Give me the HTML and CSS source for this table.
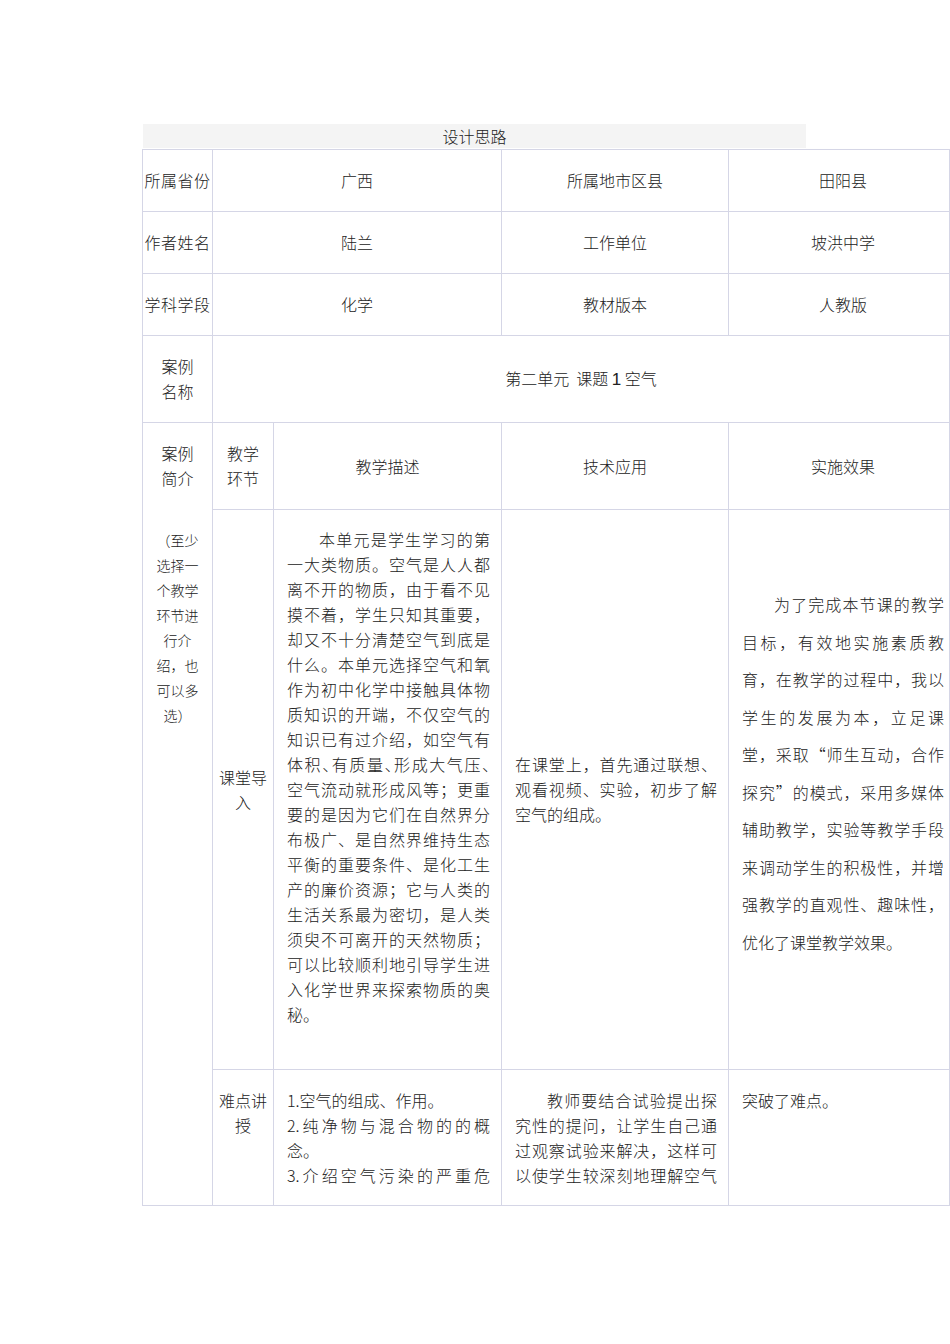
FILE: index.html
```html
<!DOCTYPE html>
<html lang="zh-CN">
<head>
<meta charset="utf-8">
<title>设计思路</title>
<link rel="stylesheet" href="styles.css">
</head>
<body>
<div class="page">
  <div class="caption">设计思路</div>
  <table class="sheet">
    <colgroup>
      <col class="c1"><col class="c2"><col class="c3"><col class="c4"><col class="c5">
    </colgroup>
    <tr class="r-info">
      <td class="label">所属省份</td>
      <td colspan="2" class="center">广西</td>
      <td class="center">所属地市区县</td>
      <td class="center last-col">田阳县</td>
    </tr>
    <tr class="r-info">
      <td class="label">作者姓名</td>
      <td colspan="2" class="center">陆兰</td>
      <td class="center">工作单位</td>
      <td class="center last-col">坡洪中学</td>
    </tr>
    <tr class="r-info">
      <td class="label">学科学段</td>
      <td colspan="2" class="center">化学</td>
      <td class="center">教材版本</td>
      <td class="center last-col">人教版</td>
    </tr>
    <tr class="r-name">
      <td class="center">案例<br>名称</td>
      <td colspan="4" class="center title">第二单元&nbsp;&nbsp;课题 <span class="num">1</span> 空气</td>
    </tr>
    <tr class="r-head">
      <td rowspan="3" class="intro">
        <div>案例<br>简介</div>
        <div class="note">（至少<br>选择一<br>个教学<br>环节进<br>行介<br>绍，也<br>可以多<br>选）</div>
      </td>
      <td class="center">教学<br>环节</td>
      <td class="center">教学描述</td>
      <td class="center">技术应用</td>
      <td class="center last-col">实施效果</td>
    </tr>
    <tr class="r-main">
      <td class="center stage">课堂导<br>入</td>
      <td class="body desc">
        <span class="ln ind">本单元是学生学习的第</span>
        <span class="ln">一大类物质。空气是人人都</span>
        <span class="ln">离不开的物质，由于看不见</span>
        <span class="ln">摸不着，学生只知其重要，</span>
        <span class="ln">却又不十分清楚空气到底是</span>
        <span class="ln">什么。本单元选择空气和氧</span>
        <span class="ln">作为初中化学中接触具体物</span>
        <span class="ln">质知识的开端，不仅空气的</span>
        <span class="ln">知识已有过介绍，如空气有</span>
        <span class="ln tight">体积、有质量、形成大气压、</span>
        <span class="ln">空气流动就形成风等；更重</span>
        <span class="ln">要的是因为它们在自然界分</span>
        <span class="ln">布极广、是自然界维持生态</span>
        <span class="ln">平衡的重要条件、是化工生</span>
        <span class="ln">产的廉价资源；它与人类的</span>
        <span class="ln">生活关系最为密切，是人类</span>
        <span class="ln">须臾不可离开的天然物质；</span>
        <span class="ln">可以比较顺利地引导学生进</span>
        <span class="ln">入化学世界来探索物质的奥</span>
        <span class="ln end">秘。</span>
      </td>
      <td class="body tech">
        <span class="ln">在课堂上，首先通过联想、</span>
        <span class="ln">观看视频、实验，初步了解</span>
        <span class="ln end">空气的组成。</span>
      </td>
      <td class="body effect">
        <span class="ln ind">为了完成本节课的教学</span>
        <span class="ln">目标，有效地实施素质教</span>
        <span class="ln">育，在教学的过程中，我以</span>
        <span class="ln">学生的发展为本，立足课</span>
        <span class="ln">堂，采取“师生互动，合作</span>
        <span class="ln">探究”的模式，采用多媒体</span>
        <span class="ln">辅助教学，实验等教学手段</span>
        <span class="ln">来调动学生的积极性，并增</span>
        <span class="ln">强教学的直观性、趣味性，</span>
        <span class="ln end">优化了课堂教学效果。</span>
      </td>
    </tr>
    <tr class="r-last">
      <td class="center stage">难点讲<br>授</td>
      <td class="body">
        <span class="ln end">1.空气的组成、作用。</span>
        <span class="ln">2.纯净物与混合物的的概</span>
        <span class="ln end">念。</span>
        <span class="ln">3.介绍空气污染的严重危</span>
      </td>
      <td class="body">
        <span class="ln ind">教师要结合试验提出探</span>
        <span class="ln">究性的提问，让学生自己通</span>
        <span class="ln">过观察试验来解决，这样可</span>
        <span class="ln">以使学生较深刻地理解空气</span>
      </td>
      <td class="body effect">
        <span class="ln end">突破了难点。</span>
      </td>
    </tr>
  </table>
</div>
</body>
</html>
```

FILE: styles.css
```css
html, body {
  margin: 0;
  padding: 0;
  background: #ffffff;
}

body {
  font-family: "Noto Sans CJK SC", "Liberation Sans", sans-serif;
  font-size: 16px;
  font-weight: 300;
  color: #222222;
}

.page {
  padding: 124px 0 0 142px;
}

.caption {
  width: 663px;
  height: 24px;
  margin-left: 1px;
  background: #f4f4f4;
  text-align: center;
  line-height: 24px;
  font-size: 16px;
}

.sheet {
  border-collapse: collapse;
  table-layout: fixed;
  width: 807px;
  margin-top: 1px;
}

.c1 { width: 70px; }
.c2 { width: 61px; }
.c3 { width: 228px; }
.c4 { width: 227px; }
.c5 { width: 221px; }

.sheet td {
  border: 1px solid #d5d6e6;
  padding: 0;
  line-height: 25px;
  vertical-align: middle;
}

.center {
  text-align: center;
}

.sheet td.last-col {
  padding-left: 8px;
}

.label {
  text-align: center;
  letter-spacing: 0.5px;
}

.num {
  font-family: "Liberation Sans", sans-serif;
  font-size: 17px;
  font-weight: 400;
}

.r-info td { height: 61px; }
.r-name td { height: 86px; }
.r-head td { height: 86px; }
.r-main td { height: 559px; }

.title {
  padding-left: 8px;
}

.sheet td.intro {
  vertical-align: top;
  text-align: center;
  padding-top: 18px;
}

.note {
  margin-top: 37px;
  font-size: 14px;
  line-height: 25px;
}

.sheet td.stage {
  padding-left: 6px;
  padding-right: 6px;
}

.sheet td.body {
  padding-left: 13px;
  padding-right: 11px;
}

.sheet td.effect {
  padding-right: 5px;
}

.desc .ln:last-child {
  margin-bottom: 25px;
}

.r-main .effect .ln {
  line-height: 37.5px;
}

.r-main .effect .ln:last-child {
  margin-bottom: 32px;
}

.sheet .r-last td {
  height: 117px;
  vertical-align: top;
  padding-top: 18px;
}

.ln {
  display: block;
  text-align: justify;
  text-align-last: justify;
  white-space: nowrap;
}

.ln.end {
  text-align-last: left;
}

.ln.ind {
  text-indent: 2em;
}

.ln.tight {
  font-feature-settings: "halt";
}
```
